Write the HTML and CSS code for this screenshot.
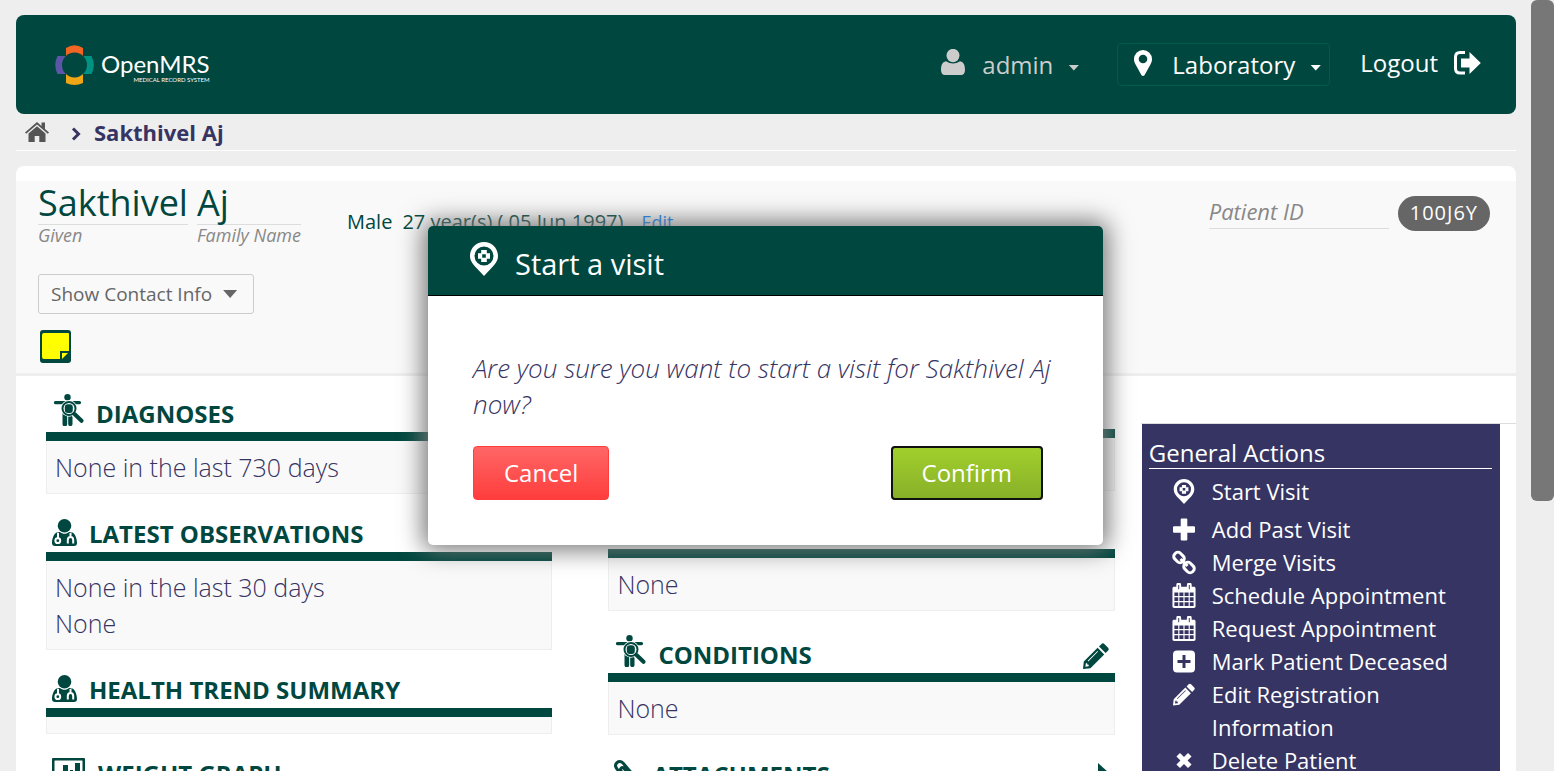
FILE: index.html
```html
<!DOCTYPE html>
<html lang="en">
<head>
<meta charset="utf-8">
<title>Sakthivel Aj - OpenMRS</title>
<link rel="stylesheet" href="styles.css">
</head>
<body>
<svg class="sprite" aria-hidden="true">
  <symbol id="i-visit" viewBox="0 0 28 34">
    <path fill-rule="evenodd" d="M14 0C6.300 0 0 6.200 0 13.800 0 19 3 22.600 7 26.500L14 34l7-7.500c4-3.900 7-7.500 7-12.700C28 6.200 21.700 0 14 0zM14 4.500a9.500 9.500 0 1 1 0 19 9.500 9.500 0 0 1 0-19z"/>
    <path fill-rule="evenodd" d="M11.200 8h5.600v3.200H20v5.600h-3.200V20h-5.600v-3.200H8v-5.600h3.200zM12.200 12.200v3.600h3.600v-3.600z"/>
  </symbol>
  <symbol id="i-diagnosis" viewBox="0 0 30 32">
    <circle cx="13.500" cy="3.200" r="3.200"/>
    <path d="M1.500 7h24a1.500 1.500 0 0 1 0 3.200h-24a1.500 1.500 0 0 1 0-3.200zM8.500 9h10v21a1.500 1.500 0 0 1-4.300 0v-8h-1v8a1.500 1.500 0 0 1-4.700 0z"/>
    <circle class="knock" cx="15" cy="14.500" r="8.200"/>
    <path class="knock-line" d="M20 20l9 9"/>
    <path class="ring" d="M21.500 14.500a6.500 6.500 0 1 1-13 0 6.500 6.500 0 0 1 13 0z"/>
    <rect x="10.800" y="10.200" width="8" height="8.800" rx="3"/>
    <path class="handle" d="M20.500 20l7 6.800"/>
  </symbol>
  <symbol id="i-observe" viewBox="0 0 25 27">
    <circle cx="12.500" cy="6.800" r="6.800"/>
    <path d="M4.500 13.500c2 0 2.500-.5 3.500-.5 2.500 2.400 6.500 2.400 9 0 1 0 1.500.5 3.500.5 3 1.500 4.500 7 4.500 10.500 0 2-1 3-3 3H3c-2 0-3-1-3-3 0-3.500 1.500-9 4.500-10.500z"/>
    <g class="steth"><path d="M6 14v5M18.500 14v4M15.800 24.500v-3.500c0-4 5.400-4 5.400 0v3.500"/><circle cx="5.800" cy="21.700" r="2.400"/></g>
  </symbol>
  <symbol id="i-calendar" viewBox="0 0 24 26">
    <path fill-rule="evenodd" d="M1.800 4H4V2a2.500 2.500 0 0 1 5 0v2h6V2a2.500 2.500 0 0 1 5 0v2h2.200C23.300 4 24 4.700 24 5.800v18.400c0 1.100-.7 1.800-1.800 1.800H1.800C.7 26 0 25.300 0 24.200V5.800C0 4.700.7 4 1.800 4zM2 10v3.500h4V10zm5.200 0v3.500h4.200V10zm5.400 0v3.500h4.200V10zm5.400 0v3.500h4V10zM2 14.800v4h4v-4zm5.200 0v4h4.200v-4zm5.400 0v4h4.200v-4zm5.400 0v4h4v-4zM2 20v4h4v-4zm5.200 0v4h4.200v-4zm5.400 0v4h4.200v-4zm5.400 0v4h4v-4zM6 2v4.500h1V2zm11 0v4.500h1V2z"/>
  </symbol>
  <symbol id="i-pencil" viewBox="0 0 26 26">
    <path fill-rule="evenodd" d="M18.500.9c.8-.8 2-.8 2.800 0l3.800 3.800c.8.800.8 2 0 2.800L22.600 10 16 3.400zM14.600 4.800l6.600 6.600L7.400 25.200 0 26l.8-7.400zM14.500 8L4.700 17.800l.6.6L15.100 8.600zM2.800 20.500l-.4 3.200 3.200-.5.200-1.500-1.500-.2-.2-1.500z"/>
  </symbol>
</svg>
<div class="screen">
  <div class="page">
    <header class="topbar">
      <a class="logo" href="#" aria-label="OpenMRS">
        <svg class="logo-mark" viewBox="0 0 39 40" aria-hidden="true">
          <path fill="#f26522" d="M11 3q8.500-5.500 17 0v8H11z"/>
          <path fill="#5b57a6" d="M2.500 11H11v18H2.500q-4.500-9 0-18z"/>
          <path fill="#009384" d="M28 11h8.500q4.500 9 0 18H28z"/>
          <path fill="#eea616" d="M11 29h17v9q-8.500 4-17 0z"/>
          <circle cx="19.500" cy="20" r="12.500" fill="#00473f"/>
        </svg>
        <span class="logo-words"><span class="logo-name">OpenMRS</span><span class="logo-tag">MEDICAL RECORD SYSTEM</span></span>
      </a>
      <nav class="account">
        <button class="user" type="button">
          <svg width="24" height="26" viewBox="0 0 24 26" aria-hidden="true"><ellipse cx="12" cy="6.500" rx="6.500" ry="6.700"/><path d="M5 12.300q7 4.500 14 0c4 .7 5 4.500 5 8.700 0 3-1.500 5-4 5H4c-2.500 0-4-2-4-5 0-4.200 1-8 5-8.700z"/></svg>
          <span>admin</span><i class="caret"></i>
        </button>
        <button class="location" type="button">
          <svg width="18" height="26" viewBox="0 0 18 26" aria-hidden="true"><path fill-rule="evenodd" d="M9 0a9 9 0 0 1 9 9c0 2-.5 3.500-1.300 5L10.500 25.200q-1.500 1.500-3 0L1.300 14C.5 12.500 0 11 0 9a9 9 0 0 1 9-9zm0 4.700a4 4 0 1 0 0 8.600 4 4 0 0 0 0-8.600z"/></svg>
          <span>Laboratory</span><i class="caret"></i>
        </button>
        <a class="logout" href="#">Logout
          <svg width="27" height="24" viewBox="0 0 27 24" aria-hidden="true"><path class="door" d="M11 1.500H6C3 1.500 1.500 3 1.500 6v11.500c0 3 1.500 4.500 4.500 4.500h5"/><path d="M7 7.500h8.500V1l11.300 11-11.300 11v-6.500H7z"/></svg>
        </a>
      </nav>
    </header>

    <nav class="crumbs" aria-label="Breadcrumb">
      <a href="#" aria-label="Home"><svg class="home" width="24" height="20" viewBox="0 0 24 20" aria-hidden="true"><path d="M12 0l4.500 3.900V.5H20v6.400l4 3.500-1.200 1.400L12 2.500 1.200 11.800 0 10.400z"/><path d="M12 4.200l8.500 7.300V20h-6.200v-6H9.700v6H3.500v-8.500z"/></svg></a>
      <svg class="chevron" width="10" height="14" viewBox="0 0 10 14" aria-hidden="true"><path d="M2 1.500L7.500 7 2 12.500"/></svg>
      <span>Sakthivel Aj</span>
    </nav>

    <main class="content">
      <section class="patient">
        <div class="patient-top">
          <h1 class="names">
            <span class="name"><span class="value">Sakthivel</span><em>Given</em></span>
            <span class="name"><span class="value">Aj</span><em>Family Name</em></span>
          </h1>
          <div class="demographics"><span>Male</span><span>27 year(s) ( 05 Jun 1997)</span><a href="#">Edit</a></div>
          <div class="ids"><em>Patient ID</em><span class="pill">100J6Y</span></div>
        </div>
        <button class="contact" type="button">Show Contact Info <i class="caret"></i></button>
        <button class="note" type="button" aria-label="Sticky note">
          <svg width="31" height="33" viewBox="0 0 31 33" aria-hidden="true"><rect width="31" height="33" rx="3" fill="#00473f"/><path fill="#ff0" d="M4 3h24q1 0 1 1v17h-9v8H4q-2 0-2-2V5q0-2 2-2z"/><path fill="#ff0" d="M22 23h6l-6 6z"/></svg>
        </button>
      </section>

      <div class="dashboard">
        <div class="column">
          <section class="card"><h2 class="card-head"><svg class="ico-body" aria-hidden="true"><use href="#i-diagnosis"/></svg>DIAGNOSES</h2><div class="card-body">None in the last 730 days</div></section>
          <section class="card"><h2 class="card-head"><svg class="ico-obs" aria-hidden="true"><use href="#i-observe"/></svg>LATEST OBSERVATIONS</h2><div class="card-body">None in the last 30 days<br>None</div></section>
          <section class="card"><h2 class="card-head"><svg class="ico-obs" aria-hidden="true"><use href="#i-observe"/></svg>HEALTH TREND SUMMARY</h2><div class="card-body"></div></section>
          <section class="card"><h2 class="card-head"><svg class="ico-graph" viewBox="0 0 33 28" aria-hidden="true"><rect class="frame" x="1" y="1" width="31" height="26" rx="2"/><path d="M6 17h3v6H6zM11 7h5v16h-5zM18 12h3v11h-3zM23 5h5v18h-5z"/></svg>WEIGHT GRAPH</h2><div class="card-body"></div></section>
        </div>
        <div class="column">
          <section class="card"><div class="card-head"></div><div class="card-body blank"></div></section>
          <section class="card"><div class="card-head"></div><div class="card-body">None</div></section>
          <section class="card tall"><h2 class="card-head"><svg class="ico-body" aria-hidden="true"><use href="#i-diagnosis"/></svg>CONDITIONS<a class="edit" href="#" aria-label="Edit conditions"><svg width="26" height="26" aria-hidden="true"><use href="#i-pencil"/></svg></a></h2><div class="card-body">None</div></section>
          <section class="card"><h2 class="card-head"><svg class="ico-clip" viewBox="0 0 22 28" aria-hidden="true"><path d="M20 16L9 3C5-1 -1 4 3 9l12 14c3 3 7 0 4.500-3.500L10 8.500c-2-2-4.500 0-3 2.500l8 9"/></svg>ATTACHMENTS<a class="edit" href="#" aria-label="Open attachments"><svg width="12" height="20" viewBox="0 0 12 20" aria-hidden="true"><path d="M1 0l11 10L1 20z"/></svg></a></h2><div class="card-body"></div></section>
        </div>
        <div class="side">
          <aside class="actions">
            <h3>General Actions</h3>
            <ul>
              <li class="first"><svg class="big" aria-hidden="true"><use href="#i-visit"/></svg><a href="#">Start Visit</a></li>
              <li><svg viewBox="0 0 20 20" aria-hidden="true"><path d="M8 0h4q1 0 1 1v6h6q1 0 1 1v4q0 1-1 1h-6v6q0 1-1 1H8q-1 0-1-1v-6H1q-1 0-1-1V8q0-1 1-1h6V1q0-1 1-1z"/></svg><a href="#">Add Past Visit</a></li>
              <li><svg class="big links" viewBox="0 0 24 24" aria-hidden="true"><rect x="1.500" y="3" width="11" height="8" rx="3.500" transform="rotate(45 7 7)"/><rect x="11.500" y="13" width="11" height="8" rx="3.500" transform="rotate(45 17 17)"/><path d="M8.500 8.500l7 7"/></svg><a href="#">Merge Visits</a></li>
              <li><svg class="big" aria-hidden="true"><use href="#i-calendar"/></svg><a href="#">Schedule Appointment</a></li>
              <li><svg class="big" aria-hidden="true"><use href="#i-calendar"/></svg><a href="#">Request Appointment</a></li>
              <li><svg viewBox="0 0 22 22" aria-hidden="true"><path fill-rule="evenodd" d="M4 0h14q4 0 4 4v14q0 4-4 4H4q-4 0-4-4V4q0-4 4-4zM9.500 4.500v5h-5v3h5v5h3v-5h5v-3h-5v-5z"/></svg><a href="#">Mark Patient Deceased</a></li>
              <li><svg aria-hidden="true"><use href="#i-pencil"/></svg><a href="#">Edit Registration Information</a></li>
              <li><svg class="small" viewBox="0 0 18 18" aria-hidden="true"><path d="M4.500.5L9 5l4.500-4.500 4 4L13 9l4.500 4.500-4 4L9 13l-4.500 4.500-4-4L5 9 .5 4.500z"/></svg><a href="#">Delete Patient</a></li>
            </ul>
          </aside>
        </div>
      </div>
    </main>
  </div>
  <div class="scroll-track" aria-hidden="true"><div class="scroll-thumb"></div></div>

  <div class="overlay">
    <div class="dialog" role="dialog" aria-labelledby="dialog-title">
      <div class="dialog-head"><svg width="28" height="34" aria-hidden="true"><use href="#i-visit"/></svg><h3 id="dialog-title">Start a visit</h3></div>
      <div class="dialog-body">
        <p>Are you sure you want to start a visit for Sakthivel Aj now?</p>
        <div class="dialog-buttons"><button class="btn cancel" type="button">Cancel</button><button class="btn confirm" type="button">Confirm</button></div>
      </div>
    </div>
  </div>
</div>
</body>
</html>
```
FILE: styles.css
```css
* { box-sizing: border-box; }
body {
  margin: 0;
  background: #eee;
  color: #363463;
  font-family: "Open Sans", "Liberation Sans", sans-serif;
  font-size: 24px;
  line-height: 36px;
}
button { margin: 0; font: inherit; background: none; border: 0; padding: 0; color: inherit; }
a { color: inherit; text-decoration: none; }
h1, h2, h3, p, ul { margin: 0; padding: 0; font-weight: 400; }
svg { flex: none; fill: currentColor; }
.sprite { position: absolute; width: 0; height: 0; }
.screen { display: flex; height: 100vh; overflow: hidden; }
.page { flex: 1; min-width: 0; padding: 15px 15px 0 16px; }
.scroll-track { width: 23px; background: #eee; }
.scroll-thumb { height: 65%; background: #777; border-radius: 6px; }
.caret {
  width: 11px;
  height: 6px;
  background: currentColor;
  clip-path: polygon(0 0, 100% 0, 50% 100%);
}

.topbar {
  display: flex;
  justify-content: space-between;
  align-items: center;
  height: 99px;
  padding: 0 35px 0 39px;
  border-radius: 8px;
  background: #00473f;
  color: #fff;
}
.logo { display: flex; align-items: center; gap: 7px; }
.logo-mark { width: 39px; height: 40px; }
.logo-words { display: flex; flex-direction: column; align-items: flex-end; padding-top: 6px; font-family: Lato, sans-serif; }
.logo-name { font-size: 24px; line-height: 24px; }
.logo-tag { font-size: 6px; line-height: 8px; }
.account { display: flex; align-items: center; }
.user { display: flex; align-items: center; gap: 17px; color: #ccc; margin-right: 38px; }
.user .caret, .location .caret { margin: 6px 0 0 -2px; }
.user svg { margin-bottom: 5px; }
.location {
  display: flex;
  align-items: center;
  gap: 20px;
  height: 43px;
  padding: 0 8px 0 16px;
  margin-right: 30px;
  border: 1px solid #005a4d;
  border-radius: 4px;
}
.location svg { margin-bottom: 3px; }
.location .caret { margin-left: -5px; }
.logout { display: flex; align-items: center; gap: 16px; padding-bottom: 3px; }
.door { fill: none; stroke: currentColor; stroke-width: 3px; }

.crumbs {
  display: flex;
  align-items: center;
  height: 37px;
  padding: 0 9px;
  border-bottom: 1px solid #fff;
  font-size: 22px;
  font-weight: 700;
}
.home { display: block; color: #555; }
.chevron { margin: 3px 13px 0 22px; fill: none; stroke: currentColor; stroke-width: 3px; }

.content { margin-top: 15px; padding-top: 15px; background: #fff; border-radius: 8px 8px 0 0; }
.patient { height: 195px; padding: 1px 26px 0 22px; background: #f9f9f9; border-bottom: 3px solid #eee; color: #00473f; }
.patient-top { display: flex; height: 92px; }
.names { display: flex; gap: 9px; }
.name { display: flex; flex-direction: column; }
.name .value { height: 43px; border-bottom: 1px solid #ddd; font-size: 36px; line-height: 42px; }
.name em { font-size: 18px; line-height: 20px; color: #888; }
.demographics { display: flex; gap: 10px; margin: 22px 0 0 46px; font-size: 20px; }
.demographics a { margin-left: 8px; color: #007fff; font-size: 18px; }
.ids { display: flex; align-items: flex-start; gap: 9px; margin: 14px 0 0 auto; }
.ids em { width: 180px; height: 33px; border-bottom: 1px solid #ddd; color: #888; font-size: 22px; line-height: 30px; }
.pill { height: 35px; padding: 0 12px; border-radius: 18px; background: #666; color: #fff; font-size: 20px; line-height: 34px; letter-spacing: 1px; }
.contact {
  display: flex;
  align-items: center;
  gap: 11px;
  height: 40px;
  padding: 0 16px 0 12px;
  border: 1px solid #ccc;
  border-radius: 3px;
  color: #666;
  font-size: 19px;
}
.contact .caret { width: 14px; height: 8px; }
.note { display: block; margin: 16px 0 0 2px; }
.note svg { display: block; }

.dashboard { display: flex; padding-left: 30px; }
.column { flex: 506 1 0; min-width: 0; margin-right: 56px; }
.column + .column { margin-right: 26px; }
.card-head {
  display: flex;
  align-items: flex-end;
  height: 67px;
  padding: 0 6px;
  border-bottom: 9px solid #00473f;
  color: #00473f;
  font-size: 24px;
  line-height: 36px;
  font-weight: 700;
}
.tall .card-head { height: 71px; }
.column + .column .card:first-child .card-head { height: 62px; }
.column:first-child .card:first-child .card-head { height: 65px; }
.card-body { min-height: 17px; padding: 8px; border: 1px solid #eee; border-top: 0; background: #f9f9f9; font-size: 25px; font-weight: 300; }
.blank { min-height: 53px; }
.ico-body { width: 30px; height: 32px; margin: 0 12px 6px 2px; }
.ico-obs { width: 25px; height: 27px; margin: 0 12px 6px 0; }
.ico-graph { width: 33px; height: 28px; margin: 0 13px 6px 0; }
.ico-clip { width: 22px; height: 28px; margin: 0 16px 5px 0; fill: none; stroke: currentColor; stroke-width: 3px; }
.frame { fill: none; stroke: currentColor; stroke-width: 3px; }
.knock { fill: #fff; }
.knock-line { fill: none; stroke: #fff; stroke-width: 6px; }
.ring { fill: none; stroke: currentColor; stroke-width: 2px; }
.handle { fill: none; stroke: currentColor; stroke-width: 4px; stroke-linecap: round; }
.steth { fill: none; stroke: #fff; stroke-width: 2px; }
.edit { margin-left: auto; height: 30px; }
.edit svg { display: block; }

.side { flex: 358 1 0; margin-top: 47px; padding: 0 16px 0 1px; border-top: 1px solid #ddd; }
.actions { padding: 12px 8px 40px 7px; background: #363463; color: #fff; }
.actions h3 { height: 33px; border-bottom: 1px solid #fff; font-size: 24px; line-height: 34px; }
.actions ul { list-style: none; padding: 6px 0 0 23px; font-size: 22px; line-height: 33px; }
.actions li { display: flex; align-items: flex-start; }
.actions .first { height: 38px; }
.actions li svg { width: 24px; height: 33px; margin-right: 16px; padding: 5px 1px; }
.actions li .big { padding: 4px 0; }
.actions li .small { padding: 8px 4px; }
.links { fill: none; stroke: currentColor; stroke-width: 3px; }

.overlay { position: absolute; inset: 0 23px 0 0; display: flex; align-items: center; justify-content: center; }
.dialog { width: 675px; background: #fff; border-radius: 5px; box-shadow: 0 0 24px 5px #777; }
.dialog-head { display: flex; align-items: flex-start; gap: 17px; height: 70px; padding: 16px 42px 0; border-bottom: 1px solid #000; border-radius: 5px 5px 0 0; background: #00473f; color: #fff; }
.dialog-head h3 { font-size: 29px; line-height: 44px; }
.dialog-body { padding: 54px 45px 45px; }
.dialog-body p { font-size: 26px; font-style: italic; font-weight: 300; }
.dialog-buttons { display: flex; justify-content: space-between; margin: 24px 15px 0 0; }
.btn { height: 54px; padding: 0 30px; border-radius: 4px; color: #fff; }
.cancel { border: 1px solid #ff3d3d; background: linear-gradient(#ff6666, #ff3d3d); }
.confirm { border: 1px solid #88af28; background: linear-gradient(#a1d02d, #88af28); outline: 2px solid #101010; outline-offset: -2px; }
```
